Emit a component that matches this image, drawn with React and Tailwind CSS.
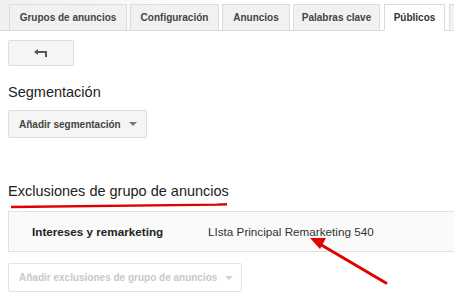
const TABS = [
  { label: 'Grupos de anuncios', w: 'w-[118px]' },
  { label: 'Configuración', w: 'w-[89px]' },
  { label: 'Anuncios', w: 'w-[68px]' },
  { label: 'Palabras clave', w: 'w-[87px]' },
  { label: 'Públicos', w: 'w-[61px]', active: true },
]

function Caret({ light }) {
  return (
    <svg width="8" height="4" viewBox="0 0 8 4" className="ml-[8px] shrink-0">
      <path d="M0 0 L8 0 L4 4 Z" fill={light ? '#d0d0d0' : '#777'} />
    </svg>
  )
}

export default function App() {
  return (
    <div
      className="relative w-[454px] h-[292px] overflow-hidden bg-white text-[#222]"
      style={{ fontFamily: 'Arial, "Liberation Sans", sans-serif' }}
    >
      {/* Tabs */}
      <div className="flex items-end h-[31px] pt-[4px] border-b border-[#d9d9d9] bg-gradient-to-r from-[#f0f0f0] via-white to-white">
        <div className="w-[9px] shrink-0 self-stretch" />
        {TABS.map((t) => (
          <div
            key={t.label}
            className={`${t.w} shrink-0 h-[27px] -mb-px flex items-center justify-center whitespace-nowrap text-[10px] font-bold border border-[#dcdcdc] ${
              t.active ? 'ml-[1px] mr-[4px] bg-white border-b-white text-[#333]' : 'mr-[3px] bg-[#f1f1f1] text-[#444]'
            }`}
          >
            {t.label}
          </div>
        ))}
        <div className="h-[27px] -mb-px w-[20px] shrink-0 border border-[#dcdcdc] bg-[#f1f1f1]" />
      </div>

      <div className="px-[8px]">
        {/* Back button */}
        <button className="mt-[9px] w-[66px] h-[26px] flex items-center justify-center bg-[#f5f5f5] border border-[#dcdcdc] rounded-[2px]">
          <svg width="14" height="8" viewBox="0 0 14 8">
            <path d="M0 3 L4 0 L4 6 Z" fill="#555" />
            <rect x="3" y="2" width="10" height="2" fill="#555" />
            <rect x="11" y="2" width="2" height="6" fill="#555" />
          </svg>
        </button>

        <h2 className="mt-[16px] text-[14.5px] leading-[20px] text-[#222]">Segmentación</h2>

        <button className="mt-[8px] h-[28px] pl-[10px] pr-[9px] flex items-center bg-[#f5f5f5] border border-[#dcdcdc] rounded-[2px] text-[10px] font-bold text-[#444]">
          Añadir segmentación
          <Caret />
        </button>

        <h2 className="mt-[43px] text-[14.5px] leading-[20px] text-[#222]">Exclusiones de grupo de anuncios</h2>
        <svg width="220" height="7" viewBox="0 0 220 7" className="block mt-[1px] ml-[3px]">
          <path d="M0 5 C60 4.4 130 3.6 206 2.6 L216 2.2" stroke="#e00000" strokeWidth="2.4" fill="none" />
        </svg>
      </div>

      <div className="mt-[2px] ml-[8px] h-[41px] flex items-center bg-[#fafafa] border-y border-l border-[#e0e0e0]">
        <span className="ml-[23px] w-[176px] text-[11.7px] font-bold text-[#222]">Intereses y remarketing</span>
        <span className="text-[11.7px] text-[#333]">LIsta Principal Remarketing 540</span>
      </div>

      <div className="px-[8px]">
        <button className="mt-[11px] h-[29px] pl-[10px] pr-[8px] flex items-center bg-white border border-[#e3e3e3] rounded-[2px] text-[10px] font-bold text-[#c8c8c8]">
          Añadir exclusiones de grupo de anuncios
          <Caret light />
        </button>
      </div>

      {/* Red annotation arrow */}
      <svg className="absolute left-0 top-0 pointer-events-none" width="454" height="292">
        <line x1="386" y1="283" x2="318" y2="243" stroke="#e00000" strokeWidth="3" strokeLinecap="round" />
        <path d="M310 238 L326 238 L320 249 Z" fill="#e00000" />
      </svg>
    </div>
  )
}
